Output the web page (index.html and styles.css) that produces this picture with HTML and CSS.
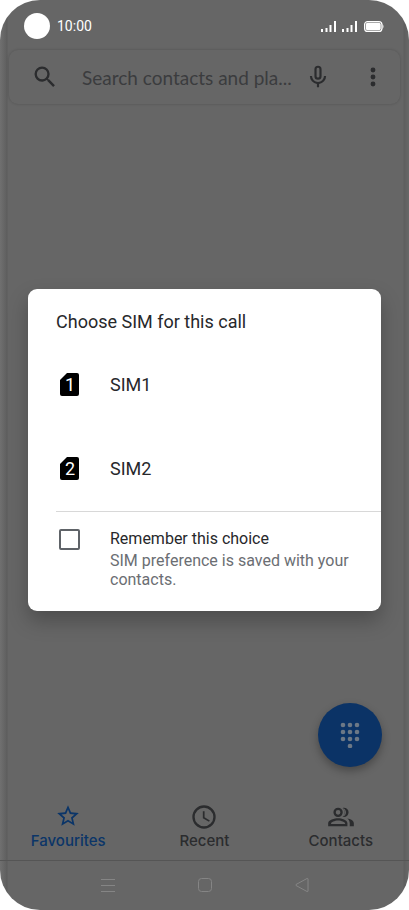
FILE: index.html
```html
<!DOCTYPE html>
<html lang="en">
<head>
  <meta charset="UTF-8" />
  <meta name="viewport" content="width=device-width, initial-scale=1" />
  <title>Phone</title>
  <link rel="stylesheet" href="styles.css">
</head>
<body>
  <div class="phone">

    <header class="status-bar">
      <span class="camera"></span>
      <span class="time">10:00</span>
      <svg class="status-icons" width="64" height="14" viewBox="0 0 64 14" fill="#fff">
        <path d="M0 10h2v3H0zM4.500 9h2v4h-2zM8.500 6h2v7h-2zM13 2h2v11h-2zM21 10h2v3h-2zM25.500 9h2v4h-2zM29.500 6h2v7h-2zM34 2h2v11h-2z" />
        <rect x="43.600" y="2.600" width="17.300" height="9.800" rx="3" fill="none" stroke="#fff" stroke-width="1.200" />
        <rect x="44.800" y="3.800" width="14.900" height="7.400" rx="1.800" />
        <path d="M61.500 5q2 2.500 0 5z" />
      </svg>
    </header>

    <div class="search">
      <button class="icon-btn" aria-label="Search">
        <svg width="28" height="28" viewBox="0 0 24 24"><path d="M15.500 14h-.79l-.28-.27A6.470 6.470 0 0 0 16 9.500 6.500 6.500 0 1 0 9.500 16c1.610 0 3.090-.59 4.230-1.570l.27.28v.79l5 4.990L20.490 19zm-6 0a4.500 4.500 0 1 1 0-9 4.500 4.500 0 0 1 0 9z" /></svg>
      </button>
      <input type="text" placeholder="Search contacts and pla..." aria-label="Search contacts and places">
      <button class="icon-btn" aria-label="Voice search">
        <svg width="26" height="26" viewBox="0 0 24 24"><path d="M12 14.500a3.300 3.300 0 0 0 3.300-3.300V4.800a3.300 3.300 0 0 0-6.600 0v6.400a3.300 3.300 0 0 0 3.300 3.300zm-1.300-9.700a1.300 1.300 0 0 1 2.600 0v6.400a1.300 1.300 0 0 1-2.600 0zM17.500 11a5.500 5.500 0 0 1-11 0h-2a7.500 7.500 0 0 0 6.500 7.420V21.500h2v-3.080A7.500 7.500 0 0 0 19.500 11z" /></svg>
      </button>
      <button class="icon-btn more" aria-label="More options">
        <svg width="28" height="28" viewBox="0 0 24 24"><circle cx="12" cy="6" r="2.100" /><circle cx="12" cy="12" r="2.100" /><circle cx="12" cy="18" r="2.100" /></svg>
      </button>
    </div>

    <main class="content">
      <button class="fab" aria-label="Key pad">
        <svg width="20" height="26" viewBox="0 0 20 26">
          <circle cx="3" cy="3" r="2.300" /><circle cx="10" cy="3" r="2.300" /><circle cx="17" cy="3" r="2.300" />
          <circle cx="3" cy="10" r="2.300" /><circle cx="10" cy="10" r="2.300" /><circle cx="17" cy="10" r="2.300" />
          <circle cx="3" cy="17" r="2.300" /><circle cx="10" cy="17" r="2.300" /><circle cx="17" cy="17" r="2.300" />
          <circle cx="10" cy="24" r="2.300" />
        </svg>
      </button>
    </main>

    <nav class="tabs">
      <a class="tab active" href="#favourites">
        <svg width="26" height="26" viewBox="0 0 24 24"><path d="M22 9.240l-7.190-.62L12 2 9.190 8.630 2 9.240l5.460 4.730L5.820 21 12 17.270 18.180 21l-1.630-7.030zM12 15.400l-3.760 2.270 1-4.280-3.320-2.880 4.380-.38L12 6.100l1.710 4.040 4.380.38-3.320 2.880 1 4.280z" /></svg>
        Favourites
      </a>
      <a class="tab" href="#recent">
        <svg width="28" height="28" viewBox="0 0 24 24"><path d="M12 2a10 10 0 1 0 0 20 10 10 0 0 0 0-20zm0 18a8 8 0 1 1 0-16 8 8 0 0 1 0 16zm.5-13H11v6l5.250 3.150.75-1.230-4.500-2.670z" /></svg>
        Recent
      </a>
      <a class="tab" href="#contacts">
        <svg width="28" height="28" viewBox="0 0 24 24"><path d="M9.500 4a4 4 0 1 0 0 8 4 4 0 0 0 0-8zm0 2a2 2 0 1 1 0 4 2 2 0 0 1 0-4zM9.500 13C6.500 13 1 14.400 1 17.300V20h16.500v-2.700C17.500 14.400 12.500 13 9.500 13zm-6 5v-.7c0-.7 3.100-2.300 6-2.300s6 1.600 6 2.300v.7zM13.500 11.800a4 4 0 0 0 0-7.600c1 1 1.600 2.300 1.600 3.800s-.6 2.800-1.600 3.800zM14.500 4a4 4 0 0 1 0 8c-.4 0-.8-.1-1.100-.2a5.500 5.500 0 0 0 0-7.600c.3-.1.700-.2 1.100-.2zM17.300 13.300c1.300.9 2.200 2.100 2.200 4V20H23v-2.700c0-2.200-2.700-3.500-5.700-4z" /></svg>
        Contacts
      </a>
    </nav>

    <footer class="system-nav">
      <button aria-label="Menu">
        <svg width="16" height="16" viewBox="0 0 16 16"><path d="M1 2.500h14M1 8.500h14M1 14.500h14" /></svg>
      </button>
      <button aria-label="Home">
        <svg width="16" height="16" viewBox="0 0 16 16"><rect x="1.500" y="1.500" width="13" height="13" rx="3" /></svg>
      </button>
      <button aria-label="Back">
        <svg width="16" height="16" viewBox="0 0 16 16"><path d="M13 1.500 2 7.500q-.8.500 0 1L13 14.500q1 .4 1-.5V2q0-.9-1-.5z" /></svg>
      </button>
    </footer>

    <div class="overlay">
      <section class="dialog" role="dialog" aria-labelledby="dialog-title">
        <h1 id="dialog-title">Choose SIM for this call</h1>

        <button class="sim">
          <svg width="28" height="28" viewBox="0 0 28 28"><path d="M11 3h10q2 0 2 2v19q0 2-2 2H6q-2 0-2-2V10z" /><text x="14" y="21">1</text></svg>
          SIM1
        </button>
        <button class="sim">
          <svg width="28" height="28" viewBox="0 0 28 28"><path d="M11 3h10q2 0 2 2v19q0 2-2 2H6q-2 0-2-2V10z" /><text x="14" y="21">2</text></svg>
          SIM2
        </button>

        <div class="remember">
          <input type="checkbox" id="remember">
          <label for="remember">
            Remember this choice
            <small>SIM preference is saved with your contacts.</small>
          </label>
        </div>
      </section>
    </div>

  </div>
</body>
</html>
```
FILE: styles.css
```css
* {
  box-sizing: border-box;
}

body {
  margin: 0;
  background: #fff;
  font-family: Roboto, "Liberation Sans", sans-serif;
}

button {
  border: 0;
  padding: 0;
  background: none;
  font: inherit;
  color: inherit;
}

svg {
  display: block;
  fill: currentColor;
}

.phone {
  position: relative;
  display: flex;
  flex-direction: column;
  min-height: 100vh;
  border-radius: 40px;
  overflow: hidden;
  background: linear-gradient(90deg, #707070, #616161 6px, #5c5c5c 7px, #666 8px, #666 calc(100% - 6px), #5e5e5e calc(100% - 5px), #686868);
  color: #2b2c2e;
}

/* status bar */
.status-bar {
  display: flex;
  align-items: center;
  height: 50px;
  padding: 2px 24px 0;
  color: #fff;
}

.camera {
  width: 26px;
  height: 26px;
  border-radius: 50%;
  background: #fff;
}

.time {
  margin-left: 7px;
  font-size: 14px;
}

.status-icons {
  margin-left: auto;
}

/* search */
.search {
  display: flex;
  align-items: center;
  height: 54px;
  margin: 0 9px;
  padding: 0 13px 0 22px;
  border-radius: 9px;
  box-shadow: 0 0 3px rgba(0, 0, 0, 0.2);
}

.search input {
  flex: 1;
  min-width: 0;
  margin: 0 8px 0 23px;
  border: 0;
  padding: 0;
  outline: none;
  background: none;
  font-family: Lato, "Liberation Sans", sans-serif;
  font-size: 19px;
}

.search input::placeholder {
  color: #3b3c3e;
  opacity: 1;
}

.icon-btn {
  flex: none;
}

.more {
  margin-left: 28px;
}

.content {
  flex: 1;
  display: flex;
  align-items: flex-end;
  justify-content: flex-end;
  padding: 0 27px 28px;
}

.fab {
  display: grid;
  place-items: center;
  width: 64px;
  height: 64px;
  border-radius: 50%;
  background: #0b3366;
  color: #6c7886;
  box-shadow: 0 4px 9px rgba(0, 0, 0, 0.3);
}

/* bottom tabs */
.tabs {
  display: grid;
  grid-template-columns: repeat(3, 1fr);
  height: 66px;
  border-bottom: 1px solid #555;
}

.tab {
  display: flex;
  flex-direction: column;
  align-items: center;
  justify-content: space-between;
  height: 56px;
  padding-top: 8px;
  font-family: Inter, "Liberation Sans", sans-serif;
  font-size: 15px;
  font-weight: 500;
  line-height: 20px;
  color: #2b2c2e;
  text-decoration: none;
}

.tab.active {
  color: #0b3568;
}

/* system buttons */
.system-nav {
  display: flex;
  justify-content: center;
  gap: 81px;
  height: 49px;
  padding-bottom: 2px;
}

.system-nav svg {
  fill: none;
  stroke: #858585;
}

/* SIM dialog */
.overlay {
  position: absolute;
  inset: 0;
  display: grid;
  align-items: center;
  padding: 0 28px 10px;
}

.dialog {
  padding: 20px 0 22px 28px;
  border-radius: 9px;
  background: #fff;
  box-shadow: 0 10px 20px rgba(0, 0, 0, 0.25);
  color: #27282b;
}

.dialog h1 {
  margin: 0 0 19px;
  font-size: 18px;
  font-weight: 400;
  line-height: 26px;
}

.sim {
  display: flex;
  align-items: center;
  gap: 26px;
  width: 100%;
  height: 60px;
  margin-bottom: 24px;
  font-size: 18px;
}

.sim + .sim {
  margin-bottom: 13px;
}

.sim path {
  fill: #000;
}

.sim text {
  fill: #fff;
  font-size: 18px;
  text-anchor: middle;
}

.remember {
  display: flex;
  align-items: flex-start;
  gap: 30px;
  padding: 17px 24px 0 3px;
  border-top: 1px solid #d8d8d8;
}

.remember input {
  appearance: none;
  flex: none;
  width: 21px;
  height: 21px;
  margin: 0;
  border: 2px solid #5f6368;
  border-radius: 2px;
}

.remember label {
  font-size: 16px;
  line-height: 20px;
}

.remember small {
  display: block;
  margin-top: 2px;
  font-size: 16px;
  line-height: 19px;
  color: #6b6e73;
}
```
